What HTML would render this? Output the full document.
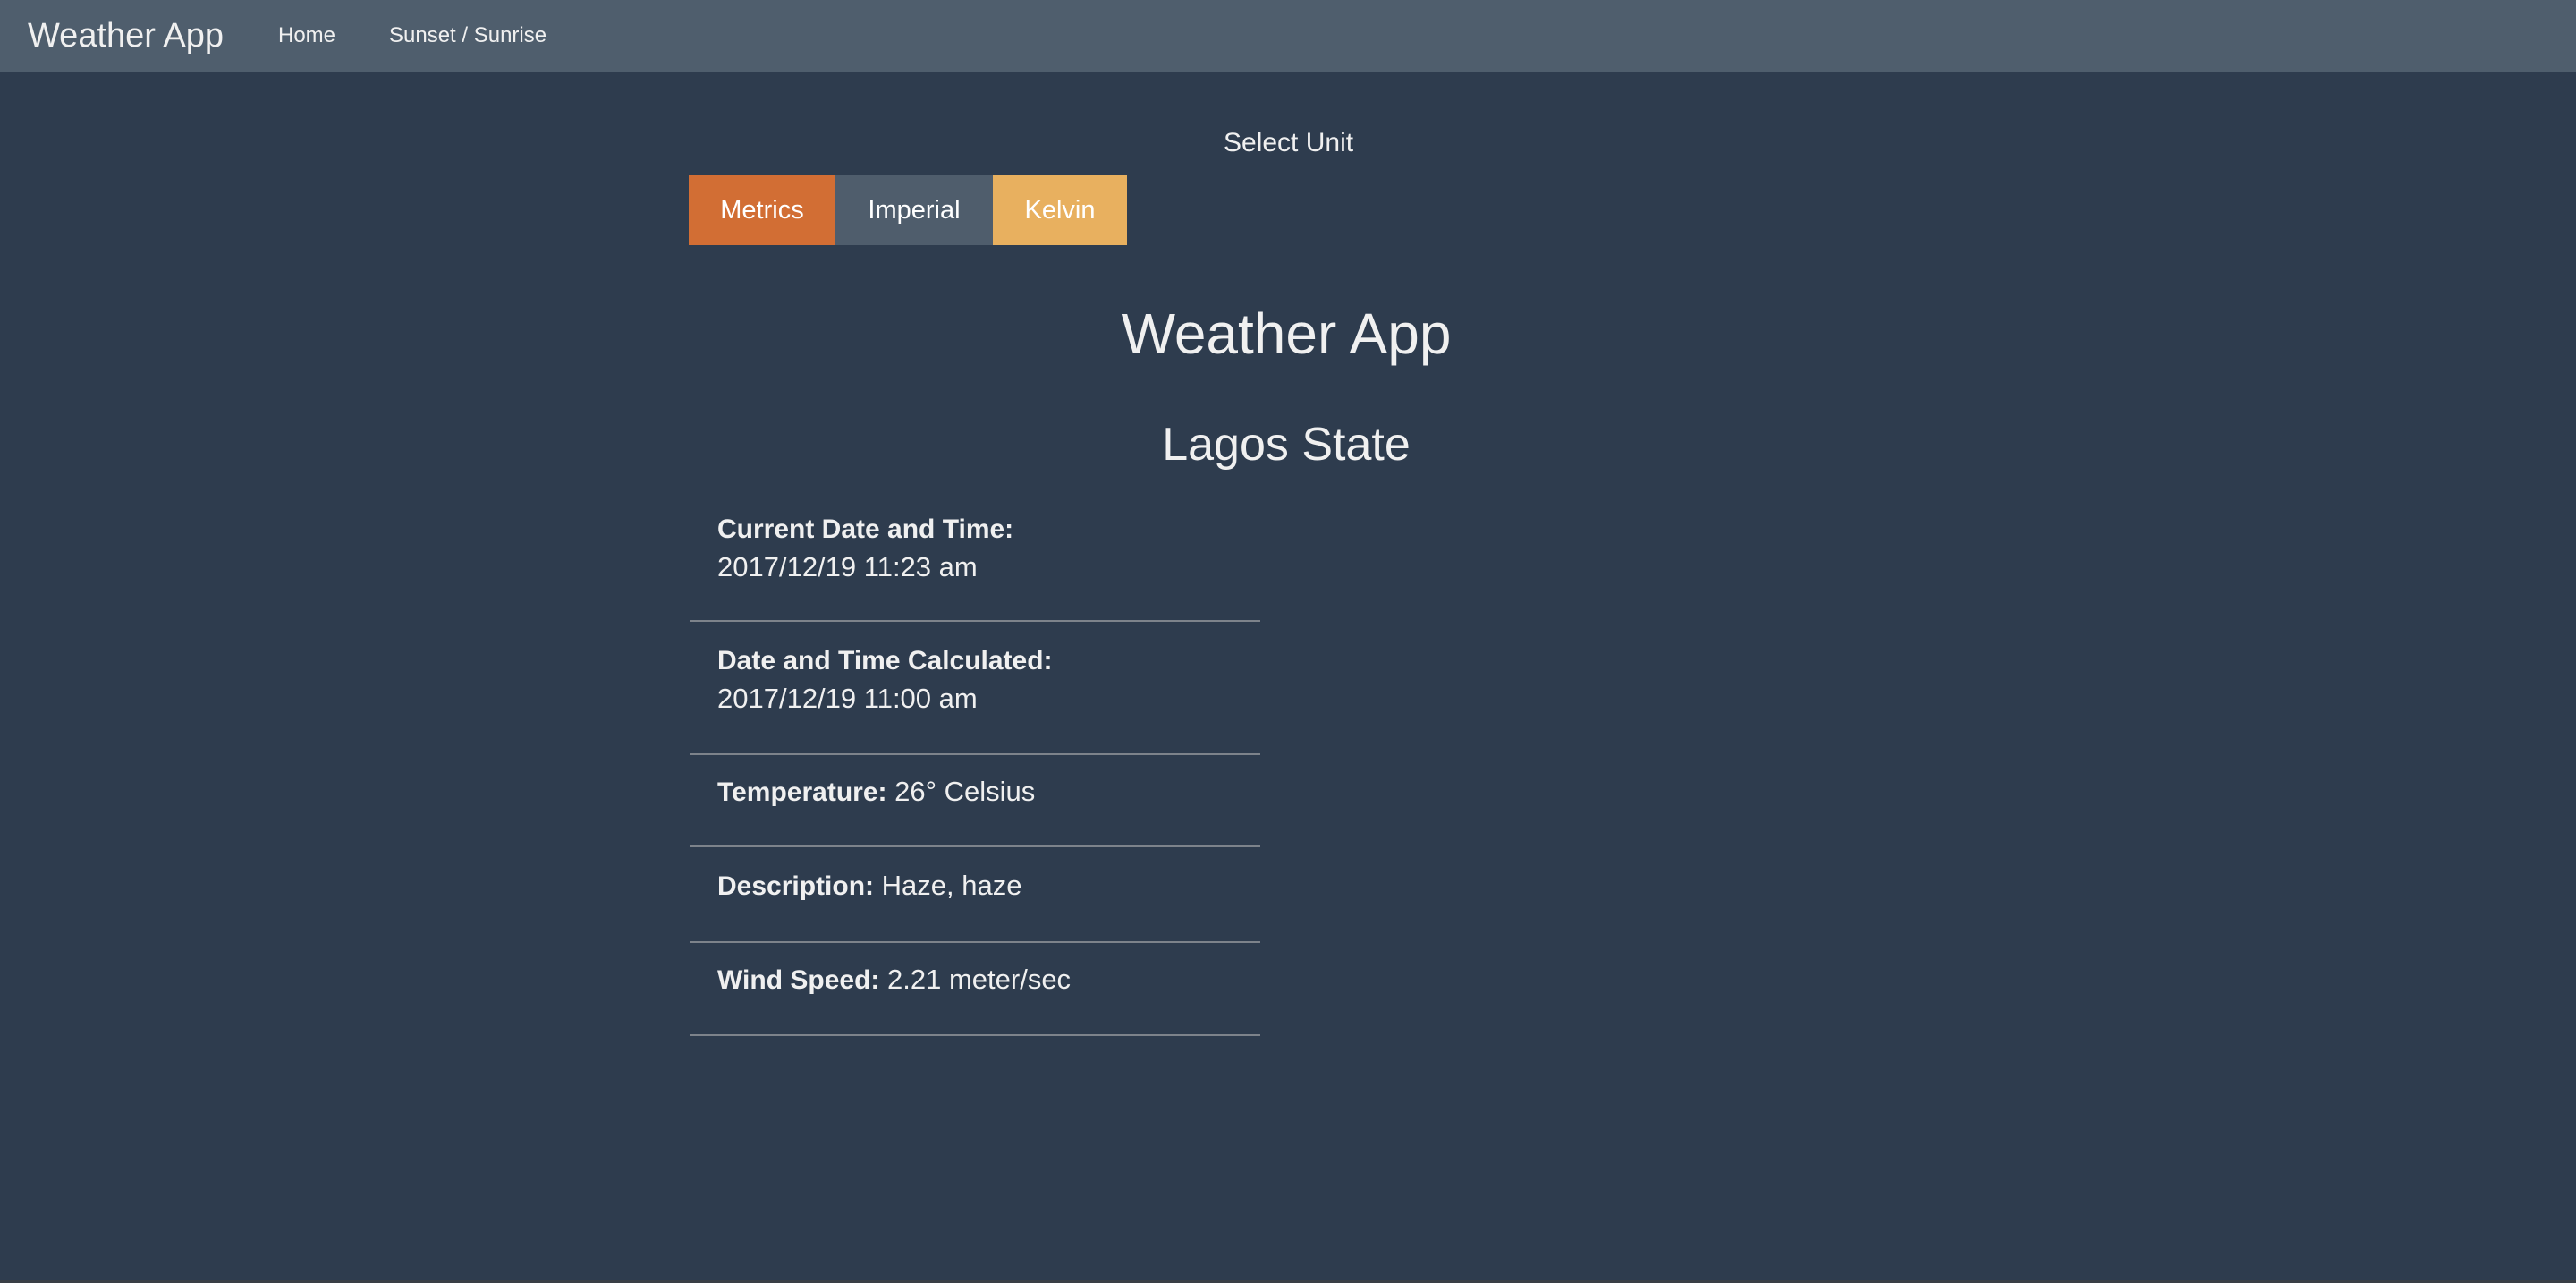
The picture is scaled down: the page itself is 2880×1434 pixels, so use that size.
<!DOCTYPE html>
<html><head><meta charset="utf-8"><style>
html,body{margin:0;padding:0;width:2880px;height:1434px;overflow:hidden;background:#2e3c4e;font-family:"Liberation Sans",Arial,sans-serif;color:#f0f0f0;position:relative}
.nav{position:absolute;left:0;top:0;width:2880px;height:80px;background:#4f5e6d}
.a{position:absolute;white-space:nowrap;line-height:1}
.btn{position:absolute;top:196px;height:78px;line-height:78px;text-align:center;font-size:29px;color:#fff}
.hr{position:absolute;left:771px;width:638px;height:2px;background:#7d838b}
.t{position:absolute;left:802px;font-size:31px;line-height:36px;white-space:nowrap}
b{font-weight:bold;font-size:30px}
.foot{position:absolute;left:0;top:1431px;width:2880px;height:3px;background:#3a3f46}
</style></head><body>
<div class="nav"></div>
<div class="a" style="left:31px;top:21px;font-size:38px">Weather App</div>
<div class="a" style="left:311px;top:28px;font-size:24px">Home</div>
<div class="a" style="left:435px;top:28px;font-size:24px">Sunset / Sunrise</div>
<div class="a" style="left:1368px;top:145px;font-size:30px">Select Unit</div>
<div class="btn" style="left:770px;width:164px;background:#d26e34">Metrics</div>
<div class="btn" style="left:934px;width:176px;background:#4f5d6c">Imperial</div>
<div class="btn" style="left:1110px;width:150px;background:#e8b05f">Kelvin</div>
<div class="a" style="left:0;width:2876px;text-align:center;top:341px;font-size:64px">Weather App</div>
<div class="a" style="left:0;width:2876px;text-align:center;top:471px;font-size:52px">Lagos State</div>
<div class="t" style="top:573px"><b>Current Date and Time:</b></div>
<div class="t" style="top:616px">2017/12/19 11:23 am</div>
<div class="hr" style="top:693px"></div>
<div class="t" style="top:720px"><b>Date and Time Calculated:</b></div>
<div class="t" style="top:763px">2017/12/19 11:00 am</div>
<div class="hr" style="top:842px"></div>
<div class="t" style="top:867px"><b>Temperature:</b> 26° Celsius</div>
<div class="hr" style="top:945px"></div>
<div class="t" style="top:972px"><b>Description:</b> Haze, haze</div>
<div class="hr" style="top:1052px"></div>
<div class="t" style="top:1077px"><b>Wind Speed:</b> 2.21 meter/sec</div>
<div class="hr" style="top:1156px"></div>
<div class="foot"></div>
</body></html>
